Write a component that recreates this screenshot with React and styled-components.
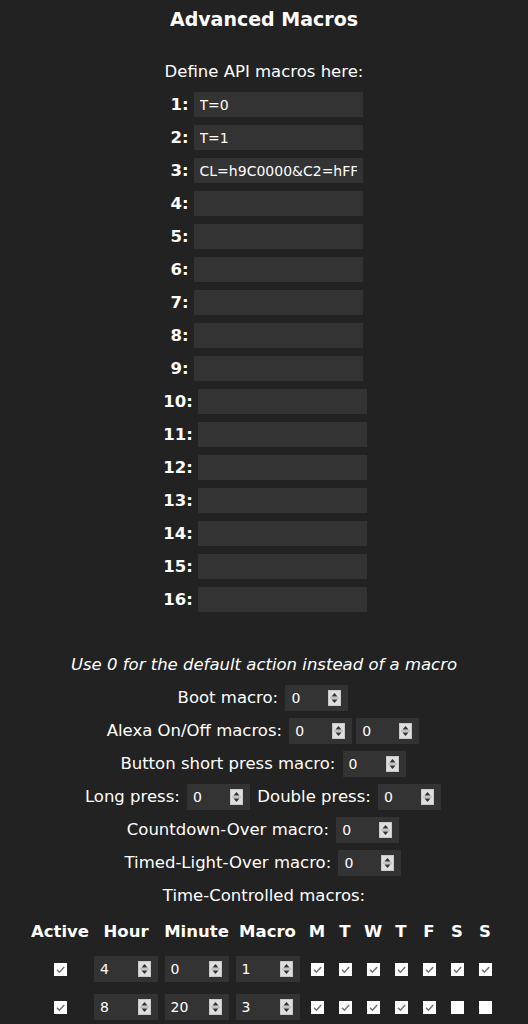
import React from "react";
import styled, { createGlobalStyle } from "styled-components";

const GlobalStyle = createGlobalStyle`
  body {
    margin: 0;
    background: #222;
    color: #fff;
    font-family: "DejaVu Sans", Verdana, sans-serif;
    font-size: 16.5px;
    line-height: 33px;
    text-align: center;
  }
`;

const Page = styled.div`
  display: flex;
  flex-direction: column;
  align-items: center;
`;

const Title = styled.h2`
  margin: 0;
  font-size: 19px;
  line-height: 38px;
  font-weight: bold;
`;

const Line = styled.div`
  display: flex;
  align-items: center;
  justify-content: center;
  height: 33px;
  white-space: pre;
  margin-top: ${(p) => p.$top || 0}px;
`;

const Hint = styled(Line)`
  font-style: italic;
`;

const MacroRow = styled.div`
  display: flex;
  align-items: center;
  justify-content: center;
  height: 33px;
  gap: 5px;
  padding-left: ${(p) => p.$shift}px;
`;

const RowLabel = styled.b`
  font-weight: bold;
`;

const TextField = styled.input`
  box-sizing: border-box;
  width: 169px;
  height: 25px;
  padding: 0 6px;
  border: none;
  outline: none;
  background: #333;
  color: #fff;
  font-family: "DejaVu Sans", Verdana, sans-serif;
  font-size: 14px;
`;

const NumberWrap = styled.span`
  position: relative;
  display: inline-flex;
  align-items: center;
  width: ${(p) => p.$w || 63}px;
  height: 26px;
  margin: 0 2px;
  background: #333;
`;

const NumberField = styled.input`
  display: block;
  box-sizing: border-box;
  width: 100%;
  height: 100%;
  padding: 0 0 0 6px;
  border: none;
  outline: none;
  background: transparent;
  color: #fff;
  font-family: "DejaVu Sans", Verdana, sans-serif;
  font-size: 14px;
  line-height: normal;
  -moz-appearance: textfield;
  &::-webkit-inner-spin-button,
  &::-webkit-outer-spin-button {
    -webkit-appearance: none;
    margin: 0;
  }
`;

const Spinner = styled.svg`
  position: absolute;
  right: 7px;
  top: 5px;
  width: 13px;
  height: 16px;
  pointer-events: none;
`;

const Table = styled.table`
  border-collapse: collapse;
  margin: 1px auto 0;
  table-layout: fixed;
`;

const Th = styled.th`
  width: ${(p) => p.$w}px;
  height: 36px;
  padding: 0;
  font-weight: bold;
  text-align: center;
`;

const Td = styled.td`
  height: 38px;
  padding: 0;
  text-align: center;
  vertical-align: middle;
`;

const Box = styled.span`
  display: inline-block;
  vertical-align: middle;
  width: 13px;
  height: 13px;
  background: #fff;
  line-height: 0;
`;

const Spin = () => (
  <Spinner viewBox="0 0 13 16">
    <rect x="0" y="0" width="13" height="16" fill="#dedede" />
    <rect x="0.5" y="0.5" width="12" height="15" fill="none" stroke="#c8c8c8" />
    <line x1="2" y1="8" x2="11" y2="8" stroke="#aaa" strokeWidth="1" />
    <path d="M6.5 3 L9.5 6.5 L3.5 6.5 Z" fill="#333" />
    <path d="M6.5 13 L9.5 9.5 L3.5 9.5 Z" fill="#333" />
  </Spinner>
);

const Num = ({ value, w }) => (
  <NumberWrap $w={w}>
    <NumberField type="number" defaultValue={value} />
    <Spin />
  </NumberWrap>
);

const Check = ({ on }) => (
  <Box>
    {on && (
      <svg width="13" height="13" viewBox="0 0 13 13">
        <path d="M3 6.8 L5.4 9.2 L10.2 4" fill="none" stroke="#6e6e6e" strokeWidth="1.4" />
      </svg>
    )}
  </Box>
);

const macros = ["T=0", "T=1", "CL=h9C0000&C2=hFFE", "", "", "", "", "", "", "", "", "", "", "", "", ""];

const cols = [
  ["Active", 62],
  ["Hour", 70],
  ["Minute", 71],
  ["Macro", 71],
  ["M", 28],
  ["T", 28],
  ["W", 28],
  ["T", 28],
  ["F", 28],
  ["S", 28],
  ["S", 28],
];

const timers = [
  { active: true, hour: 4, minute: 0, macro: 1, days: [1, 1, 1, 1, 1, 1, 1] },
  { active: true, hour: 8, minute: 20, macro: 3, days: [1, 1, 1, 1, 1, 0, 0] },
];

export default function App() {
  return (
    <Page>
      <GlobalStyle />
      <Title>Advanced Macros</Title>
      <Line $top={17}>Define API macros here:</Line>
      {macros.map((m, i) => (
        <MacroRow key={i} $shift={i >= 9 ? 2 : 5}>
          <RowLabel>{i + 1}:</RowLabel>
          <TextField type="text" defaultValue={m} />
        </MacroRow>
      ))}
      <Hint $top={32}>Use 0 for the default action instead of a macro</Hint>
      <Line>
        {"Boot macro: "}
        <Num value={0} />
      </Line>
      <Line>
        {"Alexa On/Off macros: "}
        <Num value={0} />
        {" "}
        <Num value={0} />
      </Line>
      <Line>
        {"Button short press macro: "}
        <Num value={0} />
      </Line>
      <Line>
        {"Long press: "}
        <Num value={0} />
        {" Double press: "}
        <Num value={0} />
      </Line>
      <Line>
        {"Countdown-Over macro: "}
        <Num value={0} />
      </Line>
      <Line>
        {"Timed-Light-Over macro: "}
        <Num value={0} />
      </Line>
      <Line>Time-Controlled macros:</Line>
      <Table>
        <thead>
          <tr>
            {cols.map(([label, w], i) => (
              <Th key={i} $w={w}>
                {label}
              </Th>
            ))}
          </tr>
        </thead>
        <tbody>
          {timers.map((t, i) => (
            <tr key={i}>
              <Td>
                <Check on={t.active} />
              </Td>
              <Td>
                <Num value={t.hour} w={64} />
              </Td>
              <Td>
                <Num value={t.minute} w={64} />
              </Td>
              <Td>
                <Num value={t.macro} w={64} />
              </Td>
              {t.days.map((d, j) => (
                <Td key={j}>
                  <Check on={!!d} />
                </Td>
              ))}
            </tr>
          ))}
        </tbody>
      </Table>
    </Page>
  );
}
